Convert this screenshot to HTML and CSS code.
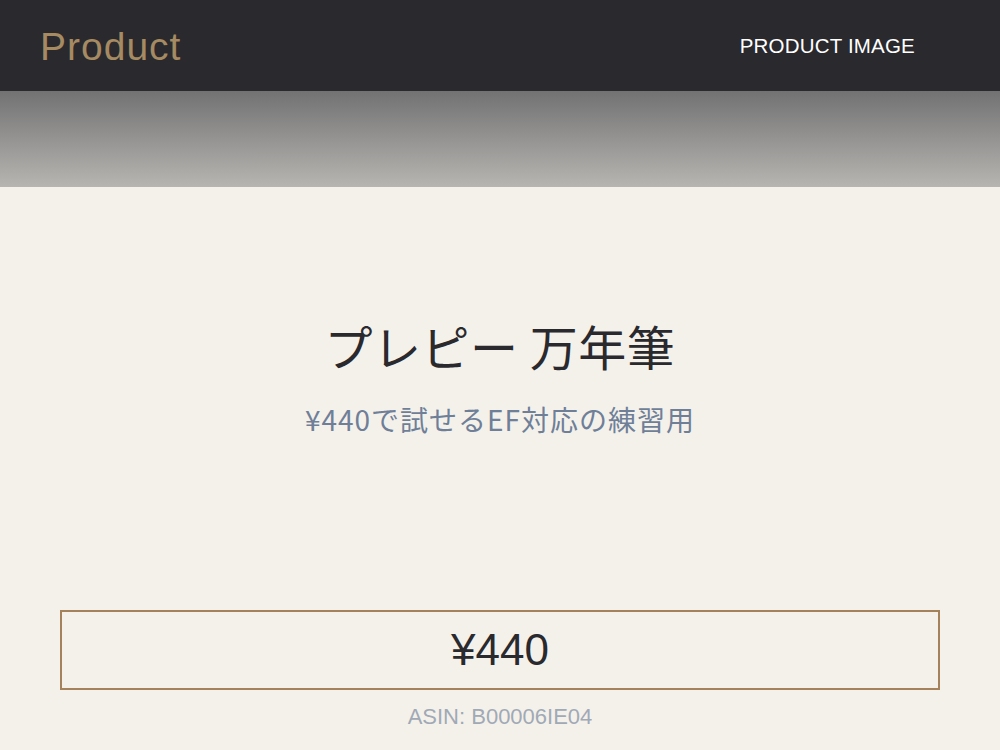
FILE: index.html
```html
<!DOCTYPE html>
<html lang="ja">
<head>
<meta charset="utf-8">
<title>Product</title>
<link rel="stylesheet" href="styles.css">
</head>
<body>
<header class="topbar">
  <div class="brand">Product</div>
  <div class="nav-label">PRODUCT IMAGE</div>
</header>
<div class="hero"></div>
<main class="content">
  <section class="intro">
    <h1 class="title">プレピー 万年筆</h1>
    <p class="subtitle">¥440で試せるEF対応の練習用</p>
  </section>
  <section class="buy">
    <div class="price-box">¥440</div>
    <p class="asin">ASIN: B00006IE04</p>
  </section>
</main>
</body>
</html>
```

FILE: styles.css
```css
* { box-sizing: border-box; }
html, body { margin: 0; padding: 0; }
body {
  width: 1000px;
  height: 750px;
  overflow: hidden;
  background: #f4f1eb;
  font-family: "Liberation Sans", "Noto Sans CJK JP", sans-serif;
}
.topbar {
  height: 91px;
  background: #2a292e;
  display: flex;
  align-items: center;
  justify-content: space-between;
  padding: 0 85px 0 40px;
}
.brand {
  color: #a58a62;
  font-size: 39px;
  font-weight: 300;
  letter-spacing: 1px;
  margin-top: 2px;
}
.nav-label {
  color: #ffffff;
  font-size: 20.5px;
  letter-spacing: 0.2px;
}
.hero {
  height: 96px;
  background: linear-gradient(to bottom, #737273, #b6b5b1);
}
.content {
  display: flex;
  flex-direction: column;
  align-items: center;
  padding: 0 60px;
}
.intro {
  padding-top: 126px;
  text-align: center;
}
.title {
  margin: 0;
  font-family: "Noto Sans CJK JP", sans-serif;
  font-weight: 400;
  font-size: 48px;
  line-height: 64px;
  letter-spacing: 0.5px;
  color: #2a292e;
}
.subtitle {
  margin: 22px 0 0;
  font-family: "Noto Sans CJK JP", sans-serif;
  font-size: 28px;
  line-height: 40px;
  letter-spacing: 1px;
  color: #6f7f98;
}
.buy {
  width: 100%;
  margin-top: 171px;
  display: flex;
  flex-direction: column;
  align-items: center;
}
.price-box {
  width: 100%;
  height: 80px;
  border: 2px solid #a5825a;
  display: flex;
  align-items: center;
  justify-content: center;
  font-size: 44px;
  color: #2a292e;
}
.asin {
  margin: 13px 0 0;
  font-size: 22px;
  line-height: 28px;
  color: #a1a9b6;
}
```
